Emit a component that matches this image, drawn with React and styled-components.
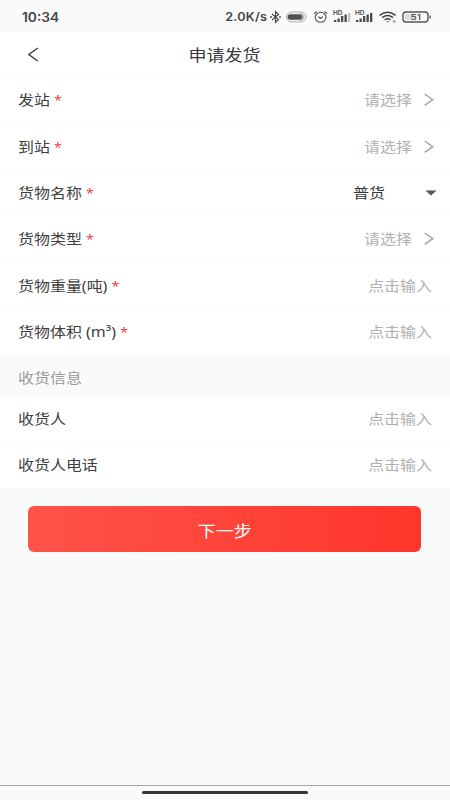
import React from 'react';
import styled, { createGlobalStyle } from 'styled-components';

const GlobalStyle = createGlobalStyle`
  * {
    box-sizing: border-box;
  }

  body {
    margin: 0;
    background: #fafafa;
    color: #404040;
    font-family: "Noto Sans", "Noto Sans CJK SC", sans-serif;
  }
`;

const Screen = styled.div`
  display: flex;
  flex-direction: column;
  width: 450px;
  height: 800px;
  overflow: hidden;
  background: #fafafa;
`;

const StatusBar = styled.div`
  display: flex;
  flex: none;
  align-items: center;
  justify-content: space-between;
  height: 32px;
  padding: 2px 18px 0 21.5px;
  color: #444;
  font-family: Inter, sans-serif;
  font-weight: 600;
`;

const Clock = styled.span`
  padding-top: 1px;
  font-size: 12.5px;
  line-height: 16px;
  transform: scaleX(1.1);
  transform-origin: left center;
`;

const Speed = styled.span`
  font-size: 11.5px;
  line-height: 16px;
  letter-spacing: 0.2px;
  transform: scaleX(1.1);
  transform-origin: right center;
`;

const StatusIcons = styled.div`
  display: flex;
  align-items: center;
`;

const GlyphRow = styled.div`
  display: grid;
  grid-template-columns: 13px 21px 16.5px 18px 19px 19px 30px;
  column-gap: 4.5px;
  align-items: center;
  margin-left: 1px;
`;

const Wide = styled.span`
  display: inline-block;
  white-space: pre;
  transform: scaleX(1.14);
  transform-origin: ${({ $origin }) => $origin || 'left'} center;
`;

const Header = styled.header`
  display: grid;
  flex: none;
  grid-template-columns: 60px 1fr 60px;
  align-items: center;
  height: 45px;
  background: #fff;
  border-bottom: 1px solid #fbfbfb;
`;

const BackButton = styled.button`
  display: flex;
  padding: 0 0 0 27px;
  border: none;
  background: none;
  color: #333;
`;

const Title = styled.h1`
  margin: 0;
  padding-top: 2px;
  color: #3a3a3a;
  font-size: 15.8px;
  font-weight: 400;
  line-height: 24px;
  text-align: center;
`;

const Group = styled.div`
  flex: none;
  background: #fff;
`;

const Row = styled.div`
  display: flex;
  align-items: center;
  justify-content: space-between;
  height: ${({ $height }) => $height || 46.3}px;
  padding: 1.5px ${({ $right }) => $right || 18}px 0 17.5px;
  border-bottom: 1px solid #fbfbfb;
  font-size: 14px;
  line-height: 20px;

  &:last-child {
    border-bottom-color: transparent;
  }
`;

const Required = styled.span`
  color: #f5403f;
  font-size: 12.5px;
  line-height: 1;
  vertical-align: 0.5px;
`;

const Value = styled.div`
  display: flex;
  align-items: center;
  gap: ${({ $gap }) => $gap || 12}px;
  color: ${({ $filled }) => ($filled ? '#3a3a3a' : '#b0b0b0')};
`;

const SectionTitle = styled.div`
  display: flex;
  flex: none;
  align-items: center;
  height: 41px;
  padding: 6px 17.5px 0;
  background: #f9fbfa;
  color: #999;
  font-size: 14px;
  line-height: 20px;
`;

const Actions = styled.div`
  flex: none;
  height: 69px;
  padding: 18px 28.6px 0 28.4px;
  background: #f9fbfb;
`;

const NextButton = styled.button`
  display: block;
  width: 100%;
  height: 46px;
  padding: 4px 0 0;
  border: none;
  border-radius: 6px;
  background: linear-gradient(90deg, #ff5349, #ff352b);
  color: #fff;
  font-family: inherit;
  font-size: 15.8px;
`;

const HomeArea = styled.div`
  display: flex;
  flex: none;
  justify-content: center;
  height: 15px;
  margin-top: auto;
  padding-top: 5px;
  border-top: 1px solid #a3a3a3;
`;

const HomeBar = styled.div`
  width: 166px;
  height: 3px;
  border-radius: 2px;
  background: #333;
`;

const SIGNAL_BARS = [2, 3.5, 6, 7.5, 9];

const SignalIcon = ({ weak }) => (
  <svg width="19" height="14" viewBox="0 0 19 14">
    <text x="0" y="5.2" fontSize="5.6" fontWeight="600" fill="#444" textLength="9.5" lengthAdjust="spacingAndGlyphs">HD</text>
    {SIGNAL_BARS.map((h, i) => (
      <rect
        key={h}
        x={1 + i * 3.5}
        y={12 - h}
        width="2.3"
        height={h}
        fill={weak && i === 4 ? '#c4c4c4' : '#4a4a4a'}
      />
    ))}
  </svg>
);

const StatusGlyphs = () => (
  <GlyphRow>
    <svg width="13" height="14" viewBox="0 0 13 14" fill="none" stroke="#444" strokeWidth="1.1">
      <path d="M3 4 L9.5 9.5 L6.5 12.5 V1.5 L9.5 4.5 L3 10" />
      <circle cx="2" cy="7" r=".4" />
      <circle cx="11" cy="7" r=".4" />
    </svg>
    <svg width="21" height="14" viewBox="0 0 21 14">
      <rect x=".6" y="2" width="19.3" height="10" rx="5" fill="#f0f0f0" stroke="#aaa" strokeWidth=".9" />
      <rect x="1.6" y="4.2" width="14.5" height="5.6" rx="2.8" fill="#505050" />
      <path d="M14.5 3.5 A3.6 3.6 0 0 1 14.5 10.5" fill="none" stroke="#777" strokeWidth=".9" />
    </svg>
    <svg width="17" height="14" viewBox="0 0 17 14" fill="none" stroke="#4a4a4a" strokeWidth="1.1">
      <ellipse cx="8.6" cy="7.3" rx="5.4" ry="5" />
      <path d="M6.3 6.7 L8.6 8.3 L11 6.7 M1.9 3.6 L4.6 1.5 M12.6 1.5 L15.3 3.6" />
    </svg>
    <SignalIcon weak />
    <SignalIcon />
    <svg width="19" height="14" viewBox="0 0 19 14" fill="none" stroke="#444" strokeWidth="1.5">
      <path d="M.6 5.3 Q8.6 -.8 16.6 5.3 M3.2 7.6 Q8.6 3.3 14 7.6 M5.7 9.8 Q8.6 7.5 11.5 9.8" />
      <path d="M7.3 11.2 H9.9 L8.6 12.4 Z" fill="#444" stroke="none" />
      <circle cx="15.2" cy="11.4" r="1.1" stroke="#777" strokeWidth=".8" />
    </svg>
    <svg width="30" height="14" viewBox="0 0 30 14">
      <rect x="1" y="2" width="25" height="10" rx="3" fill="#fafafa" stroke="#555" strokeWidth="1.4" />
      <rect x="3" y="3.8" width="11" height="6.4" rx="1" fill="#ddd" />
      <rect x="27.5" y="5.5" width="1.3" height="3" fill="#555" />
      <text x="8.5" y="9.9" fontSize="8" fontWeight="500" fill="#444" textLength="10.5" lengthAdjust="spacingAndGlyphs">51</text>
    </svg>
  </GlyphRow>
);

const BackIcon = () => (
  <svg width="12" height="15" viewBox="0 0 12 15" fill="none" stroke="currentColor" strokeWidth="1.3">
    <path d="M10.8 1 L1.8 7.5 L10.8 14" />
  </svg>
);

const ChevronIcon = () => (
  <svg width="11" height="14" viewBox="0 0 11 14" fill="none" stroke="#a5a5a5" strokeWidth="1.5">
    <path d="M.7 1 L8.8 6.7 L.7 12.4" />
  </svg>
);

const DropdownIcon = () => (
  <svg width="12" height="6" viewBox="0 0 12 6" fill="#555">
    <path d="M.5 .5 H11.5 L6 5.5 Z" />
  </svg>
);

const cargoFields = [
  { label: '发站', type: 'select' },
  { label: '到站', type: 'select' },
  { label: '货物名称', type: 'dropdown', value: '普货' },
  { label: '货物类型', type: 'select' },
  { label: '货物重量(吨)', type: 'input' },
  { label: '货物体积 (m³)', type: 'input' },
];

const receiverFields = ['收货人', '收货人电话'];

const FieldValue = ({ type, value }) => {
  if (type === 'select') {
    return (
      <Value>
        <Wide $origin="right">请选择</Wide>
        <ChevronIcon />
      </Value>
    );
  }
  if (type === 'dropdown') {
    return (
      <Value $filled $gap={40}>
        <Wide $origin="right">{value}</Wide>
        <DropdownIcon />
      </Value>
    );
  }
  return (
    <Value>
      <Wide $origin="right">点击输入</Wide>
    </Value>
  );
};

const rightPadding = { select: 15.5, dropdown: 13.5, input: 18 };

const App = () => (
  <>
    <GlobalStyle />
    <Screen>
      <StatusBar>
        <Clock>10:34</Clock>
        <StatusIcons>
          <Speed>2.0K/s</Speed>
          <StatusGlyphs />
        </StatusIcons>
      </StatusBar>
      <Header>
        <BackButton aria-label="返回">
          <BackIcon />
        </BackButton>
        <Title>
          <Wide $origin="center">申请发货</Wide>
        </Title>
      </Header>
      <Group>
        {cargoFields.map((field) => (
          <Row key={field.label} $right={rightPadding[field.type]}>
            <Wide>
              {field.label} <Required>*</Required>
            </Wide>
            <FieldValue type={field.type} value={field.value} />
          </Row>
        ))}
      </Group>
      <SectionTitle>
        <Wide>收货信息</Wide>
      </SectionTitle>
      <Group>
        {receiverFields.map((label) => (
          <Row key={label} $height={46.1}>
            <Wide>{label}</Wide>
            <FieldValue type="input" />
          </Row>
        ))}
      </Group>
      <Actions>
        <NextButton>
          <Wide $origin="center">下一步</Wide>
        </NextButton>
      </Actions>
      <HomeArea>
        <HomeBar />
      </HomeArea>
    </Screen>
  </>
);

export default App;
